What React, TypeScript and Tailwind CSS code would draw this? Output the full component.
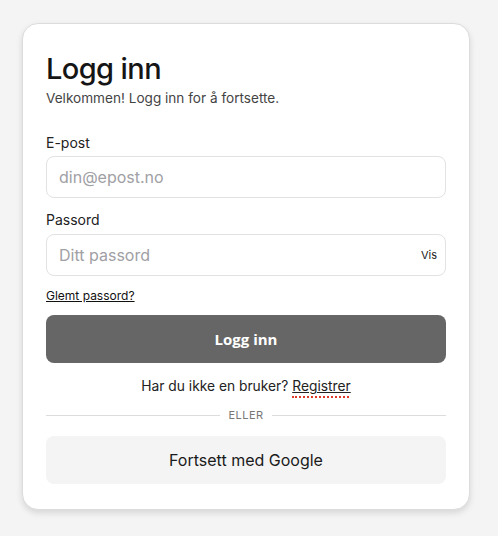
import React from "react";

export default function App() {
  return (
    <div className="min-h-[536px] w-full bg-[#f4f4f4] pt-[23px] pl-[22px]" style={{ fontFamily: "Inter, 'Noto Sans', sans-serif" }}>
      <div className="w-[448px] rounded-[16px] border border-[#dcdcdc] bg-white px-[23px] pt-[26px] pb-[25px] shadow-[0_3px_6px_rgba(0,0,0,0.12)]">
        <h1 className="text-[29px] leading-[38px] font-medium tracking-[-0.6px] text-[#151515]">Logg inn</h1>
        <p className="mt-[1px] text-[13.6px] leading-[18px] text-[#444]">Velkommen! Logg inn for å fortsette.</p>

        <label className="mt-[27px] block text-[14px] leading-[18px] text-[#222]">E-post</label>
        <div className="mt-[4px] flex h-[42px] items-center rounded-[8px] border border-[#e2e2e2] px-[12px]">
          <span className="text-[16px] text-[#a0a0a5]">din@epost.no</span>
        </div>

        <label className="mt-[13px] block text-[14px] leading-[18px] text-[#222]">Passord</label>
        <div className="mt-[5px] flex h-[42px] items-center justify-between rounded-[8px] border border-[#e2e2e2] pl-[12px] pr-[8px]">
          <span className="text-[16px] text-[#a0a0a5]">Ditt passord</span>
          <span className="text-[11px] text-[#222]">Vis</span>
        </div>

        <div className="mt-[13px] text-[12px] leading-[14px] text-[#111] underline">Glemt passord?</div>

        <button className="mt-[12px] flex h-[48px] w-full items-center justify-center rounded-[8px] bg-[#666666] text-[15px] font-bold text-white" style={{ fontFamily: "'Open Sans', sans-serif" }}>
          Logg inn
        </button>

        <div className="mt-[14px] text-center text-[13.8px] leading-[18px] text-[#222]">
          Har du ikke en bruker?{" "}
          <span className="relative underline">
            Registrer
            <span className="absolute left-0 right-[2px] top-[18px] h-[2px] border-b-2 border-dotted border-[#e03a2a]" />
          </span>
        </div>

        <div className="mt-[13px] flex items-center gap-[8px]">
          <div className="h-px flex-1 bg-[#dcdcdc]" />
          <span className="text-[11px] leading-[14px] tracking-[0.5px] text-[#777]">ELLER</span>
          <div className="h-px flex-1 bg-[#dcdcdc]" />
        </div>

        <button className="mt-[14px] flex h-[48px] w-full items-center justify-center rounded-[8px] bg-[#f4f4f4] text-[16px] text-[#1a1a1a]">
          Fortsett med Google
        </button>
      </div>
    </div>
  );
}
